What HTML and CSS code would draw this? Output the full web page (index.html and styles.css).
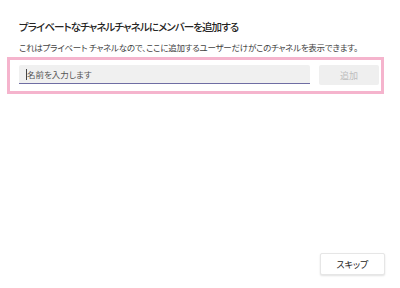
FILE: index.html
```html
<!DOCTYPE html>
<html lang="ja">
<head>
    <meta charset="UTF-8">
    <meta name="viewport" content="width=device-width, initial-scale=1.0">
    <title>メンバーを追加</title>
    <link rel="stylesheet" href="styles.css">
</head>
<body>
    <div class="dialog">
        <h2>プライベートなチャネルチャネルにメンバーを追加する</h2>
        <p class="hint">これはプライベート チャネルなので、ここに追加するユーザーだけがこのチャネルを表示できます。</p>

        <div class="picker">
            <div class="name-input">
                <span class="caret"></span>
                <span class="placeholder">名前を入力します</span>
            </div>
            <button class="add-btn" disabled>追加</button>
        </div>

        <div class="footer">
            <button class="skip-btn">スキップ</button>
        </div>
    </div>
</body>
</html>
```

FILE: styles.css
```css
* {
    margin: 0;
    padding: 0;
    box-sizing: border-box;
    font-family: 'Noto Sans CJK JP', 'Noto Sans', sans-serif;
    font-feature-settings: "palt";
}

body {
    background: #fff;
    width: 400px;
    height: 288px;
    overflow: hidden;
}

.dialog {
    display: flex;
    flex-direction: column;
    height: 288px;
    padding: 19px 16px 13px 19px;
}

h2 {
    font-size: 10.5px;
    line-height: 16px;
    font-weight: 500;
    letter-spacing: -0.9px;
    color: #252423;
    white-space: nowrap;
}

.hint {
    margin-top: 6px;
    font-size: 8.5px;
    line-height: 12px;
    letter-spacing: -0.25px;
    color: #424242;
    white-space: nowrap;
}

.picker {
    display: flex;
    gap: 9px;
    width: 377px;
    margin-top: 4px;
    margin-left: -12px;
    padding: 5px 2px 6px 9px;
    border: 3px solid #f5b4cd;
}

.name-input {
    display: flex;
    align-items: center;
    width: 291px;
    height: 19px;
    padding-left: 7px;
    background: #f0f0f0;
    border-bottom: 1px solid #6f6da3;
    border-radius: 2px 2px 0 0;
}

.caret {
    width: 1px;
    height: 11px;
    background: #444;
}

.placeholder {
    font-size: 8.5px;
    color: #555;
}

.add-btn {
    width: 60px;
    height: 20px;
    border: none;
    border-radius: 2px;
    background: #efefef;
    color: #bdbdbd;
    font-size: 9px;
}

.footer {
    margin-top: auto;
    display: flex;
    justify-content: flex-end;
}

.skip-btn {
    width: 65px;
    height: 22px;
    margin-right: -1px;
    background: #fff;
    border: 1px solid #e6e6e6;
    border-radius: 2px;
    box-shadow: 0 1px 2px rgba(0, 0, 0, 0.12);
    color: #252423;
    font-size: 9px;
}
```
